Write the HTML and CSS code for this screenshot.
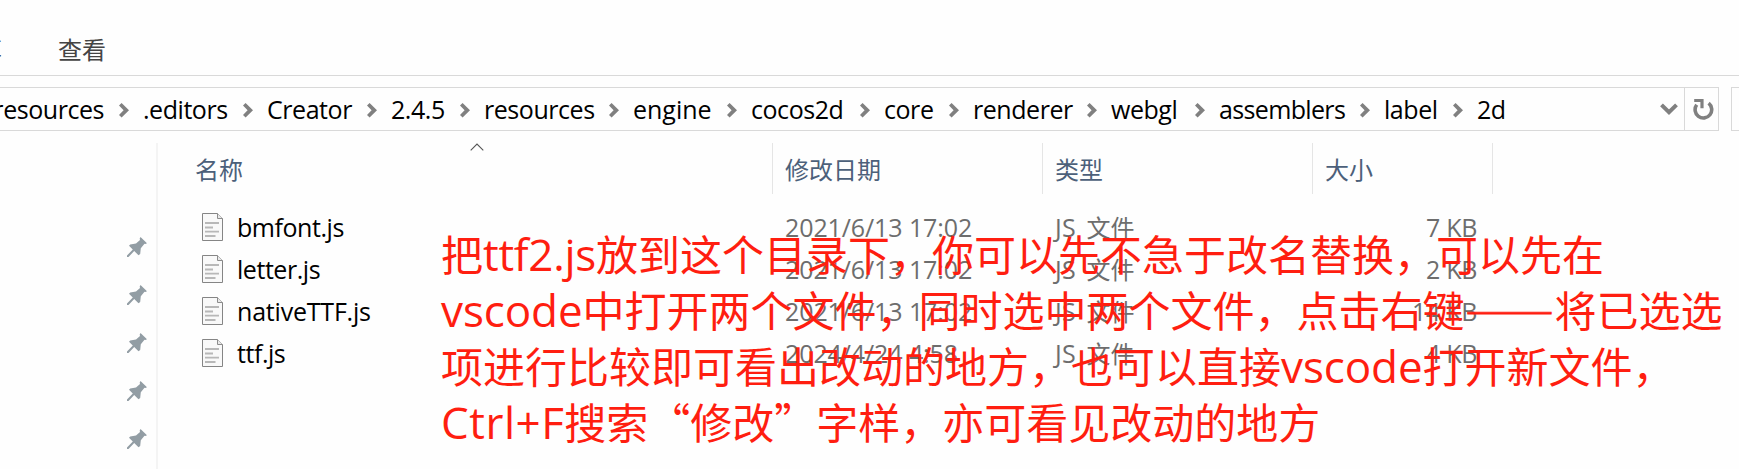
FILE: index.html
```
<!DOCTYPE html>
<html lang="zh-CN">
<head>
<meta charset="utf-8">
<title>2d</title>
<link rel="stylesheet" href="styles.css">
</head>
<body>
<svg width="0" height="0" class="defs">
  <defs>
    <symbol id="chev" viewBox="0 0 10 15"><path d="M2.600 0 10 7.300 2.600 14.600 0 12 4.600 7.300 0 2.600z" fill="#808080"/></symbol>
    <symbol id="file" viewBox="0 0 21 28"><path d="M.5.5h15l5 5v22H.5z" fill="#f9f9f9" stroke="#858585"/><path d="M15.500.5v5h5" fill="#e9e9e9" stroke="#8c8c8c"/><path d="M3 10h14M3 14.500h8M3 18.700h14M3 23h10.500" stroke="#b8b8b8" stroke-width="1.800"/></symbol>
    <symbol id="pin" viewBox="0 0 20 20"><path d="M13.500 0 20 6.200 18.300 7 17.500 6.800 13.800 11.300 13.200 17 11.500 18.200 7.200 14 1.500 20H0v-1.500L5.800 12.500 2 8.700 3.200 7.400 9 6.500 13 3 12.700 1.500z" fill="#929da4"/></symbol>
  </defs>
</svg>
<div class="window">
  <div class="tabs"><span class="tab tab-share">共享</span><span class="tab">查看</span></div>
  <div class="address-row">
    <div class="address">
      <div class="crumbs">
        <div class="crumb first">resources</div>
        <div class="crumb"><svg><use href="#chev"/></svg>.editors</div>
        <div class="crumb"><svg><use href="#chev"/></svg>Creator</div>
        <div class="crumb"><svg><use href="#chev"/></svg>2.4.5</div>
        <div class="crumb"><svg><use href="#chev"/></svg>resources</div>
        <div class="crumb engine"><svg><use href="#chev"/></svg>engine</div>
        <div class="crumb"><svg><use href="#chev"/></svg>cocos2d</div>
        <div class="crumb"><svg><use href="#chev"/></svg>core</div>
        <div class="crumb"><svg><use href="#chev"/></svg>renderer</div>
        <div class="crumb"><svg><use href="#chev"/></svg>webgl</div>
        <div class="crumb assemblers"><svg><use href="#chev"/></svg>assemblers</div>
        <div class="crumb"><svg><use href="#chev"/></svg>label</div>
        <div class="crumb"><svg><use href="#chev"/></svg>2d</div>
      </div>
      <svg class="drop" viewBox="0 0 18 12"><path d="M1.500 1.800 9 9.200 16.500 1.800" fill="none" stroke="#808080" stroke-width="4"/></svg>
      <div class="refresh"><svg viewBox="0 0 21 22"><path d="M3.700 6.800A8.300 8.300 0 1 0 15.600 5.200" fill="none" stroke="#808080" stroke-width="3.600"/><path d="M1.200 2.500H9V10.200" fill="none" stroke="#808080" stroke-width="3.200"/></svg></div>
    </div>
    <div class="search"></div>
  </div>
  <div class="main">
    <div class="nav">
      <svg><use href="#pin"/></svg><svg><use href="#pin"/></svg><svg><use href="#pin"/></svg><svg><use href="#pin"/></svg><svg><use href="#pin"/></svg>
    </div>
    <div class="list">
      <div class="head">
        <div class="col">名称<svg class="sort" viewBox="0 0 14 8"><path d="M.7 7.300 7 1 13.300 7.300" fill="none" stroke="#555" stroke-width="1.100"/></svg></div>
        <div class="col">修改日期</div><div class="col">类型</div><div class="col">大小</div>
      </div>
      <div class="row"><div class="name"><svg><use href="#file"/></svg>bmfont.js</div><div class="date">2021/6/13 17:02</div><div class="type">JS <span class="zh">文件</span></div><div class="size">7 KB</div></div>
      <div class="row"><div class="name"><svg><use href="#file"/></svg>letter.js</div><div class="date">2021/6/13 17:02</div><div class="type">JS <span class="zh">文件</span></div><div class="size">2 KB</div></div>
      <div class="row"><div class="name ttf-name"><svg><use href="#file"/></svg>nativeTTF.js</div><div class="date">2021/6/13 17:02</div><div class="type">JS <span class="zh">文件</span></div><div class="size">14 KB</div></div>
      <div class="row"><div class="name"><svg><use href="#file"/></svg>ttf.js</div><div class="date">2024/4/24 4:58</div><div class="type">JS <span class="zh">文件</span></div><div class="size">4 KB</div></div>
    </div>
  </div>
  <div class="note">
    <div>把<span class="en ttf">ttf2.js</span>放到这个目录下，你可以先不急于改名替换，可以先在</div>
    <div><span class="en">vscode</span>中打开两个文件，同时选中两个文件，点击右键<span class="dash">——</span>将已选选</div>
    <div>项进行比较即可看出改动的地方，也可以直接<span class="en">vscode</span>打开新文件，</div>
    <div><span class="en ctrl">Ctrl+F</span>搜索“修改”字样，亦可看见改动的地方</div>
  </div>
</div>
</body>
</html>
```

FILE: styles.css
```
* { box-sizing: border-box; }
body { margin: 0; background: #fff; }
.defs { position: absolute; }
.window {
  position: relative;
  width: 1739px;
  height: 469px;
  overflow: hidden;
  background: #fefefe;
  font: 25px/42px "Open Sans", "Noto Sans CJK SC", sans-serif;
  letter-spacing: -0.45px;
  white-space: nowrap;
  color: #000;
}
.tabs {
  height: 76px;
  padding-top: 28px;
  border-bottom: 1px solid #d9d9d9;
  display: flex;
  gap: 56px;
  font: 24px/42px "Noto Sans CJK SC", sans-serif;
  letter-spacing: 0;
  color: #444;
}
.tab-share { margin-left: -46px; }
.address-row { display: flex; gap: 12px; padding-top: 11px; }
.address {
  width: 1719px;
  height: 44px;
  border: 1px solid #d9d9d9;
  border-left: 0;
  display: flex;
  align-items: center;
}
.crumbs {
  width: 1660px;
  line-height: 40px;
  padding-bottom: 1px;
  display: grid;
  grid-template-columns: 119px 124px 124px 93px 149px 118px 133px 89px 138px 108px 165px 93px 120px;
}
.crumb { display: flex; align-items: center; gap: 14px; }
.crumb.first { justify-content: flex-end; padding-right: 15px; }
.crumb.engine { letter-spacing: 0; }
.crumb.assemblers { letter-spacing: -0.65px; }
.crumb svg { width: 10px; height: 15px; flex: none; margin-top: 3px; }
.drop { width: 18px; height: 12px; }
.refresh {
  margin-left: 6px;
  height: 42px;
  flex: 1;
  border-left: 1px solid #d9d9d9;
  display: flex;
  align-items: center;
  justify-content: center;
  padding-left: 3px;
}
.refresh svg { width: 21px; height: 22px; }
.search { flex: 1; border: 1px solid #d9d9d9; border-right: 0; }
.main { display: flex; padding-top: 12px; height: 338px; }
.nav {
  width: 158px;
  border-right: 2px solid #f4f4f4;
  display: flex;
  flex-direction: column;
  gap: 28px;
  padding: 94px 0 0 127px;
}
.nav svg { width: 20px; height: 20px; flex: none; }
.list { flex: 1; }
.head, .row { display: grid; grid-template-columns: 615px 270px 270px 180px; }
.head {
  height: 51px;
  margin-bottom: 12px;
  font: 24px/51px "Noto Sans CJK SC", sans-serif;
  letter-spacing: 0;
  color: #4c607a;
}
.col { height: 51px; border-right: 1px solid #e5e5e5; padding-left: 12px; }
.col:first-child { padding-left: 37px; display: flex; }
.sort { width: 14px; height: 8px; margin: 0 0 0 227px; }
.row { height: 42px; color: #6d6d6d; }
.row > div { padding-left: 12px; }
.row .name { padding-left: 44px; display: flex; align-items: center; gap: 14px; color: #000; }
.row .ttf-name { letter-spacing: -0.2px; }
.name svg { width: 21px; height: 28px; flex: none; }
.date { letter-spacing: -0.1px; }
.type { letter-spacing: 0.2px; word-spacing: 4px; }
.zh { font: 24px/1 "Noto Sans CJK SC", sans-serif; letter-spacing: 0; }
.row .size { text-align: right; padding-right: 16px; letter-spacing: -0.3px; }
.note {
  position: absolute;
  left: 441px;
  top: 225px;
  font: 42px/56px "Noto Sans CJK SC", sans-serif;
  letter-spacing: 0;
  color: #ff1e10;
}
.note div { height: 56px; }
.en { font: 44px/1 "Open Sans", sans-serif; letter-spacing: -0.1px; }
.ttf { letter-spacing: -0.3px; }
.ctrl { letter-spacing: 0.5px; }
.dash { position: relative; top: 4px; font-size: 45px; line-height: 1; -webkit-text-stroke: 0.9px #ff1e10; }
```
